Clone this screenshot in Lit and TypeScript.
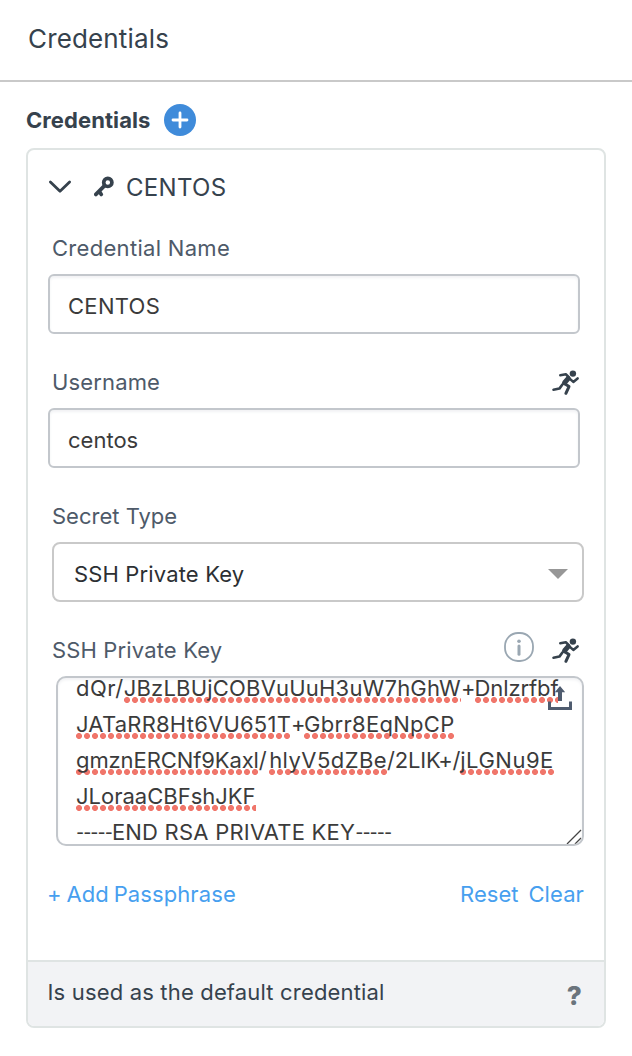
import { LitElement, html, css, svg } from "lit";
import { customElement } from "lit/decorators.js";

interface Segment {
  text: string;
  spacing: number;
  kind?: "flagged" | "dashes";
}

const KEY_LINES: Segment[][] = [
  [
    { text: "dQr/", spacing: 0.5 },
    { text: "JBzLBUjCOBVuUuH3uW7hGhW", spacing: 0.2, kind: "flagged" },
    { text: "+", spacing: -1 },
    { text: "Dnlzrfbf", spacing: -0.1, kind: "flagged" },
  ],
  [
    { text: "JATaRR8Ht6VU651T", spacing: 0.22, kind: "flagged" },
    { text: "+", spacing: -1.6 },
    { text: "Gbrr8EqNpCP", spacing: 0.3, kind: "flagged" },
  ],
  [
    { text: "gmznERCNf9Kaxl", spacing: -0.1, kind: "flagged" },
    { text: "/", spacing: 2.4 },
    { text: "hlyV5dZBe", spacing: 0.45, kind: "flagged" },
    { text: "/2LIK+/", spacing: -0.2 },
    { text: "jLGNu9E", spacing: 0.5, kind: "flagged" },
  ],
  [{ text: "JLoraaCBFshJKF", spacing: 0, kind: "flagged" }],
  [
    { text: "-----", spacing: -1, kind: "dashes" },
    { text: "END RSA PRIVATE KEY", spacing: 0.22 },
    { text: "-----", spacing: -1, kind: "dashes" },
  ],
];

const runner = html`<svg class="runner" width="28" height="26" viewBox="0 0 28 26">
  ${svg`<g fill="none" stroke="#36424d" stroke-width="2.6" stroke-linecap="round" stroke-linejoin="round">
    <path d="M8.3 5.2L13.8 4.2L16.5 7"/>
    <path d="M17.6 8.6L21.3 11.9L25.6 8.4"/>
    <path stroke-width="5" d="M16.3 8.3L12.6 12.7"/>
    <path stroke-width="3" d="M12.4 13.6L17 16.6L13.9 23.3"/>
    <path d="M10.6 14.3L7.4 18.6L1.5 19.8"/>
  </g><circle cx="20.9" cy="3.6" r="3.2" fill="#36424d"/>`}
</svg>`;

@customElement("app-root")
export class AppRoot extends LitElement {
  static styles = css`
    :host {
      display: block;
      min-height: 1056px;
      background: #fff;
      font: 400 22px/30px Inter, "Liberation Sans", sans-serif;
      color: #36424d;
    }
    * { box-sizing: border-box; }
    svg { display: block; flex: none; }
    header {
      display: flex;
      align-items: center;
      height: 82px;
      padding: 0 28px 2px;
      border-bottom: 2px solid #c9c9c9;
      font-size: 26px;
      letter-spacing: 0.15px;
    }
    .section {
      display: flex;
      align-items: center;
      padding: 22px 26px 12px;
    }
    .section-title { width: 138px; font-weight: 700; letter-spacing: 0.08px; }
    .card {
      display: flex;
      flex-direction: column;
      height: 880px;
      margin: 0 26px;
      border: 2px solid #dfe4e3;
      border-radius: 8px;
      overflow: hidden;
    }
    .card-head {
      display: flex;
      align-items: center;
      height: 74px;
      padding-left: 20px;
      font-size: 24px;
      letter-spacing: 0.3px;
    }
    .card-head span { padding-top: 2px; }
    .key { margin: 0 11px 2px 22px; }
    .label-row {
      display: flex;
      align-items: center;
      justify-content: space-between;
      height: 50px;
      padding: 0 24px 2px 24px;
      color: #4e5a69;
    }
    .wide { letter-spacing: 0.3px; }
    .mid { letter-spacing: 0.15px; }
    .runner { margin-top: 2px; }
    .icons { display: flex; align-items: center; gap: 18px; }
    .info { margin-bottom: 6px; }
    .field {
      display: flex;
      align-items: center;
      height: 60px;
      margin: 0 24px 24px 20px;
      padding: 4px 18px 0 18px;
      border: 2px solid #c3c7cc;
      border-radius: 6px;
      box-shadow: inset 0 2px 3px #f1f2f4;
      color: #3b3b3b;
    }
    .select {
      justify-content: space-between;
      margin: 0 20px 24px 24px;
      padding: 4px 14px 0 20px;
      border-color: #c9c9c9;
      border-radius: 8px;
      box-shadow: none;
      color: #2c2f33;
    }
    .secret {
      position: relative;
      height: 170px;
      margin: 0 20px 0 28px;
      border: 2px solid #c3c7cc;
      border-radius: 10px;
      box-shadow: inset 0 2px 3px #f1f2f4;
      overflow: hidden;
      color: #3b3b3b;
    }
    .lines { margin-top: -8px; padding-left: 18px; }
    .line { height: 36px; line-height: 36px; white-space: pre; }
    .flagged {
      padding-bottom: 2px;
      background: radial-gradient(circle at 3px 3px, #f0766b 0, #f0766b 2.6px, rgba(240, 118, 107, 0) 3.4px) 0 100% / 8px 6px repeat-x;
    }
    .dashes { font-family: Lato, sans-serif; }
    .upload { position: absolute; right: 10px; top: 8px; }
    .grip { position: absolute; right: 0; bottom: 0; }
    .links {
      display: flex;
      align-items: center;
      height: 96px;
      padding: 0 20px 0 19px;
      color: #479fef;
    }
    .links span:first-child { margin-right: auto; word-spacing: -1.5px; letter-spacing: 0.1px; }
    .links span:last-child { margin-left: 10px; letter-spacing: 0.1px; }
    footer {
      display: flex;
      align-items: center;
      justify-content: space-between;
      margin-top: auto;
      height: 66px;
      padding: 0 22px 4px 19.5px;
      border-top: 2px solid #dfe4e3;
      background: #f2f3f5;
      letter-spacing: 0.17px;
    }
    .help {
      padding-top: 8px;
      font-size: 26px;
      font-weight: 800;
      color: #6b747c;
    }
  `;

  render() {
    return html`
      <header>Credentials</header>
      <div class="section">
        <span class="section-title">Credentials</span>
        <svg width="32" height="32" viewBox="0 0 32 32">
          <circle cx="16" cy="16" r="16" fill="#3f8bda" />
          <path d="M16 9V23M9 16H23" stroke="#fff" stroke-width="2.8" stroke-linecap="round" />
        </svg>
      </div>
      <div class="card">
        <div class="card-head">
          <svg width="24" height="14" viewBox="0 0 24 14">
            <path d="M2.4 2L12 11.2L21.6 2" fill="none" stroke="#36424d" stroke-width="2.8" stroke-linecap="round" stroke-linejoin="round" />
          </svg>
          <svg class="key" width="21" height="21" viewBox="0 0 21 21">
            <circle cx="13.8" cy="6.4" r="4.1" fill="none" stroke="#36424d" stroke-width="3.7" />
            <path d="M10.6 9.7L1.9 18.4M5.3 15.2L7.2 18.4" fill="none" stroke="#36424d" stroke-width="3.8" stroke-linecap="round" />
          </svg>
          <span>CENTOS</span>
        </div>
        <div class="label-row"><span class="wide">Credential Name</span></div>
        <div class="field wide">CENTOS</div>
        <div class="label-row"><span class="mid">Username</span>${runner}</div>
        <div class="field">centos</div>
        <div class="label-row"><span>Secret Type</span></div>
        <div class="field select">
          <span class="mid">SSH Private Key</span>
          <svg width="20" height="10" viewBox="0 0 20 10"><path d="M0 0H20L10 10Z" fill="#979797" /></svg>
        </div>
        <div class="label-row">
          <span class="mid">SSH Private Key</span>
          <div class="icons">
            <svg class="info" width="30" height="30" viewBox="0 0 30 30">
              <rect x="1" y="1" width="28" height="28" rx="13" fill="none" stroke="#9aa7b2" stroke-width="1.8" />
              <path d="M15 14V22.3" stroke="#9aa7b2" stroke-width="3" stroke-linecap="round" />
              <circle cx="15" cy="9.3" r="1.8" fill="#9aa7b2" />
            </svg>
            ${runner}
          </div>
        </div>
        <div class="secret">
          <div class="lines">
            ${KEY_LINES.map(
              (line) => html`<div class="line">${line.map(
                (s) => html`<span class=${s.kind ?? "plain"} style="letter-spacing:${s.spacing}px">${s.text}</span>`
              )}</div>`
            )}
          </div>
          <svg class="upload" width="24" height="24" viewBox="0 0 24 24">
            <path d="M1.5 15.5V22.5H22.5V15.5" fill="none" stroke="#4f5c6f" stroke-width="3" />
            <path d="M12 0L17.2 6.2H14V15H10V6.2H6.8Z" fill="#4f5c6f" />
          </svg>
          <svg class="grip" width="16" height="16" viewBox="0 0 16 16">
            <path d="M1 16L15 2M9 16L15 10" stroke="#444" stroke-width="1.3" />
          </svg>
        </div>
        <div class="links"><span>+ Add Passphrase</span><span>Reset</span><span>Clear</span></div>
        <footer><span>Is used as the default credential</span><span class="help">?</span></footer>
      </div>
    `;
  }
}
